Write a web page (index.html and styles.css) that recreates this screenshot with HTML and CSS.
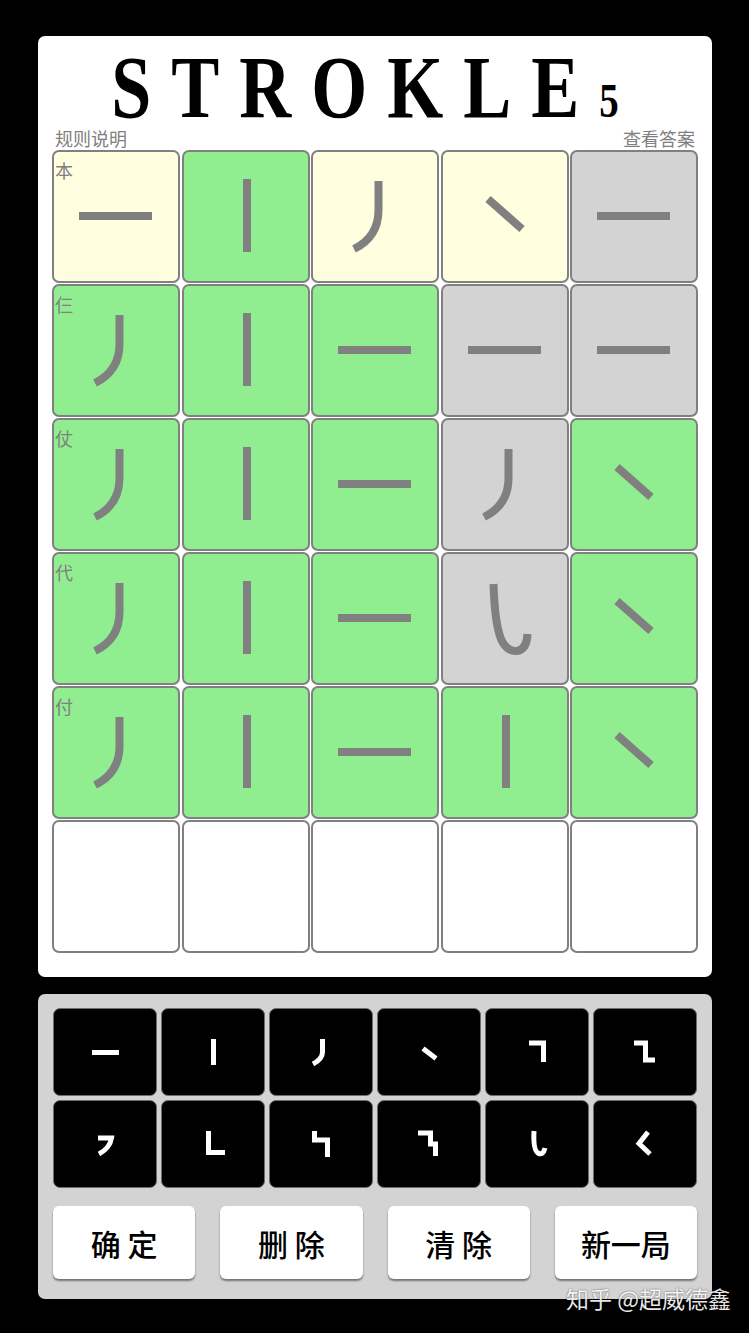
FILE: index.html
```html
<!DOCTYPE html>
<html lang="zh-CN">
<head>
  <meta charset="UTF-8">
  <meta name="viewport" content="width=device-width, initial-scale=1.0">
  <title>Strokle</title>
  <link rel="stylesheet" href="styles.css">
</head>
<body>

  <!-- stroke shapes, reused by the board and the keys -->
  <svg class="defs" aria-hidden="true">
    <!-- board strokes (cell coords, 128x133) -->
    <symbol id="heng" viewBox="2 2 124 129"><path d="M27,66 H100"/></symbol>
    <symbol id="shu" viewBox="2 2 124 129"><path d="M65,29 V102"/></symbol>
    <symbol id="pie" viewBox="2 2 124 129"><path d="M67.5,31 V60 Q67.5,87 43,99"/></symbol>
    <symbol id="dian" viewBox="2 2 124 129"><path d="M47,49 L81,79"/></symbol>
    <symbol id="wangou" viewBox="2 2 124 129"><path d="M52.5,32 Q54,78 62,91 Q68,100 76,99 Q86,97 86.5,82"/></symbol>

    <!-- key strokes (key coords, 104x88) -->
    <symbol id="k-heng" viewBox="1 1 102 86"><path d="M39,44.5 H66"/></symbol>
    <symbol id="k-shu" viewBox="1 1 102 86"><path d="M52.5,31 V57"/></symbol>
    <symbol id="k-pie" viewBox="1 1 102 86"><path d="M53.5,31 V44 Q53.5,51 44,56"/></symbol>
    <symbol id="k-dian" viewBox="1 1 102 86"><path d="M46,40.5 L59,50.5"/></symbol>
    <symbol id="k-hengzhe" viewBox="1 1 102 86"><path d="M44,35 H58.5 V54"/></symbol>
    <symbol id="k-hengzhezhe" viewBox="1 1 102 86"><path d="M41,35 H52.5 V52 H62"/></symbol>
    <symbol id="k-hengpie" viewBox="1 1 102 86"><path d="M45,38 H58.5 Q57,48 46,54"/></symbol>
    <symbol id="k-shuzhe" viewBox="1 1 102 86"><path d="M47.5,31 V52.5 H64"/></symbol>
    <symbol id="k-shuzhezhe" viewBox="1 1 102 86"><path d="M45.5,31 V40 H58.5 V57"/></symbol>
    <symbol id="k-hengzhezhezhe" viewBox="1 1 102 86"><path d="M41,33 H53.5 V44 H58.5 V56"/></symbol>
    <symbol id="k-xiegou" viewBox="1 1 102 86"><path d="M49,31 Q48,50 53,53 Q58,56 60,48"/></symbol>
    <symbol id="k-piedian" viewBox="1 1 102 86"><path d="M55,32 L46,43.5 L57,54"/></symbol>
  </svg>

  <div class="card">
    <h1 class="title">STROKLE<span class="len">5</span></h1>
    <div class="links">
      <span>规则说明</span>
      <span>查看答案</span>
    </div>

    <div class="board">
      <!-- 本 -->
      <div class="cell near"><span class="hint">本</span><svg><use href="#heng"/></svg></div>
      <div class="cell hit"><svg><use href="#shu"/></svg></div>
      <div class="cell near"><svg><use href="#pie"/></svg></div>
      <div class="cell near"><svg><use href="#dian"/></svg></div>
      <div class="cell miss"><svg><use href="#heng"/></svg></div>
      <!-- 仨 -->
      <div class="cell hit"><span class="hint">仨</span><svg><use href="#pie"/></svg></div>
      <div class="cell hit"><svg><use href="#shu"/></svg></div>
      <div class="cell hit"><svg><use href="#heng"/></svg></div>
      <div class="cell miss"><svg><use href="#heng"/></svg></div>
      <div class="cell miss"><svg><use href="#heng"/></svg></div>
      <!-- 仗 -->
      <div class="cell hit"><span class="hint">仗</span><svg><use href="#pie"/></svg></div>
      <div class="cell hit"><svg><use href="#shu"/></svg></div>
      <div class="cell hit"><svg><use href="#heng"/></svg></div>
      <div class="cell miss"><svg><use href="#pie"/></svg></div>
      <div class="cell hit"><svg><use href="#dian"/></svg></div>
      <!-- 代 -->
      <div class="cell hit"><span class="hint">代</span><svg><use href="#pie"/></svg></div>
      <div class="cell hit"><svg><use href="#shu"/></svg></div>
      <div class="cell hit"><svg><use href="#heng"/></svg></div>
      <div class="cell miss"><svg><use href="#wangou"/></svg></div>
      <div class="cell hit"><svg><use href="#dian"/></svg></div>
      <!-- 付 -->
      <div class="cell hit"><span class="hint">付</span><svg><use href="#pie"/></svg></div>
      <div class="cell hit"><svg><use href="#shu"/></svg></div>
      <div class="cell hit"><svg><use href="#heng"/></svg></div>
      <div class="cell hit"><svg><use href="#shu"/></svg></div>
      <div class="cell hit"><svg><use href="#dian"/></svg></div>
      <!-- empty row -->
      <div class="cell"></div>
      <div class="cell"></div>
      <div class="cell"></div>
      <div class="cell"></div>
      <div class="cell"></div>
    </div>
  </div>

  <div class="keyboard">
    <div class="keys">
      <button class="key"><svg><use href="#k-heng"/></svg></button>
      <button class="key"><svg><use href="#k-shu"/></svg></button>
      <button class="key"><svg><use href="#k-pie"/></svg></button>
      <button class="key"><svg><use href="#k-dian"/></svg></button>
      <button class="key"><svg><use href="#k-hengzhe"/></svg></button>
      <button class="key"><svg><use href="#k-hengzhezhe"/></svg></button>
      <button class="key"><svg><use href="#k-hengpie"/></svg></button>
      <button class="key"><svg><use href="#k-shuzhe"/></svg></button>
      <button class="key"><svg><use href="#k-shuzhezhe"/></svg></button>
      <button class="key"><svg><use href="#k-hengzhezhezhe"/></svg></button>
      <button class="key"><svg><use href="#k-xiegou"/></svg></button>
      <button class="key"><svg><use href="#k-piedian"/></svg></button>
    </div>
    <div class="actions">
      <button class="action">确 定</button>
      <button class="action">删 除</button>
      <button class="action">清 除</button>
      <button class="action">新一局</button>
    </div>
  </div>

  <div class="watermark">知乎 @超威德鑫</div>

</body>
</html>
```

FILE: styles.css
```css
html {
  background: #000;
}
body {
  margin: 0;
  padding: 36px 0 0;
  position: relative;
  min-height: 1297px;
  background: #000;
  font-family: "Noto Sans CJK SC", "Noto Sans", sans-serif;
}
.defs {
  position: absolute;
  width: 0;
  height: 0;
  overflow: hidden;
}
/* white game card */
.card {
  width: 646px;
  margin-left: 38px;
  padding: 27px 14px 24px;
  background: #fff;
  border-radius: 7px;
}
.title {
  margin: 0;
  padding-right: 20px;
  height: 60px;
  font-family: "Liberation Serif", serif;
  font-weight: bold;
  font-size: 72px;
  line-height: 60px;
  letter-spacing: 20px;
  text-align: center;
  color: #000;
  transform: scaleY(1.22);
  transform-origin: 50% 54px;
}
.title .len {
  font-size: 39px;
  letter-spacing: 0;
}
.links {
  display: flex;
  justify-content: space-between;
  padding: 0 3px;
  margin-top: 3px;
  font-size: 18px;
  line-height: 24px;
  color: #808080;
}
.board {
  display: grid;
  grid-template-columns: repeat(5, 128px);
  grid-auto-rows: 133px;
  gap: 1px 1.5px;
  margin-top: 0;
}
.cell {
  position: relative;
  box-sizing: border-box;
  border: 2px solid #808080;
  border-radius: 7px;
  background: #fff;
}
.cell svg {
  display: block;
  width: 100%;
  height: 100%;
  fill: none;
  stroke: #808080;
  stroke-width: 8;
}
.cell.hit {
  background: #90ee90;
}
.cell.near {
  background: #ffffe0;
}
.cell.miss {
  background: #d3d3d3;
}
.hint {
  position: absolute;
  top: 6px;
  left: 1px;
  font-size: 18px;
  line-height: 24px;
  color: #808080;
}
/* keyboard panel */
.keyboard {
  width: 644px;
  margin: 17px 0 0 38px;
  padding: 14px 15px 20px;
  background: #d3d3d3;
  border-radius: 7px;
}
.keys {
  display: grid;
  grid-template-columns: repeat(6, 104px);
  grid-auto-rows: 88px;
  gap: 4px;
}
.key {
  display: block;
  padding: 0;
  border: 1px solid #6e6e6e;
  border-radius: 7px;
  background: #000;
  cursor: pointer;
}
.key svg {
  display: block;
  width: 100%;
  height: 100%;
  fill: none;
  stroke: #fff;
  stroke-width: 5;
  stroke-linejoin: miter;
}
.actions {
  display: grid;
  grid-template-columns: repeat(4, 1fr);
  gap: 25px;
  margin-top: 18px;
}
.action {
  height: 73px;
  padding: 0;
  border: none;
  border-radius: 6px;
  background: #fff;
  box-shadow: 0 2px 2px rgba(0, 0, 0, 0.45);
  font-family: "Noto Sans CJK SC", sans-serif;
  font-size: 30px;
  font-weight: 500;
  color: #000;
  cursor: pointer;
}
.watermark {
  position: absolute;
  left: 566px;
  top: 1282px;
  font-size: 23px;
  line-height: 32px;
  color: rgba(255, 255, 255, 0.92);
  text-shadow: 0 0 2px rgba(0, 0, 0, 0.6);
  white-space: nowrap;
}
```
